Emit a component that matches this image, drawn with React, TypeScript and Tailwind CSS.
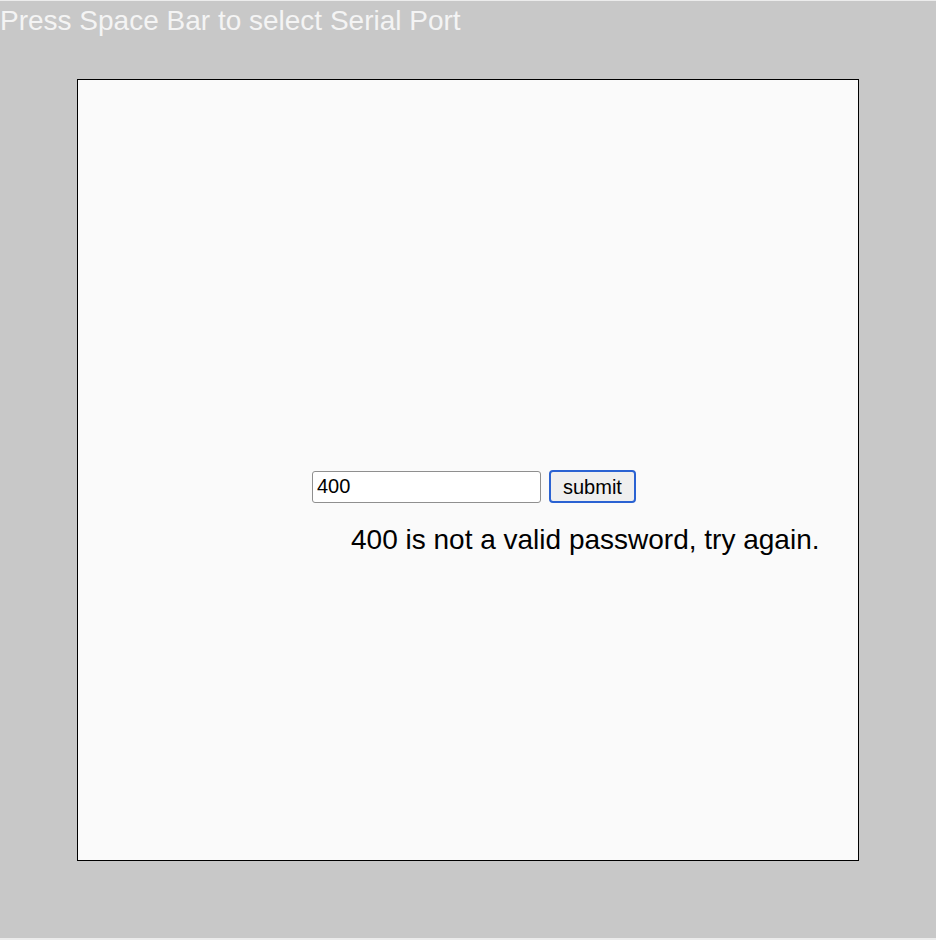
export default function App() {
  return (
    <div className="w-[936px] h-[940px] bg-[#ececec] pt-px font-['Liberation_Sans',Arial,sans-serif]">
      <div className="h-[937px] bg-[#c8c8c8]">
        <div className="h-[40px] text-[28px] leading-[40px] text-[#f4f4f4]">
          Press Space Bar to select Serial Port
        </div>
        <div className="ml-[77px] mt-[38px] w-[782px] h-[782px] border border-black bg-[#fafafa]">
          <div className="pt-[390px] pl-[234px] flex flex-col">
            <div className="flex items-center gap-2">
              <input
                defaultValue="400"
                className="w-[229px] h-[32px] border border-[#8f8f8f] rounded-[3px] bg-white px-[4px] text-[20px] text-black outline-none"
              />
              <button className="h-[33px] px-[12px] border-2 border-[#2a62d2] rounded-[4px] bg-[#efefef] text-[20px] text-black">
                submit
              </button>
            </div>
            <div className="ml-[39px] mt-[16px] text-[28px] text-black">
              400 is not a valid password, try again.
            </div>
          </div>
        </div>
      </div>
    </div>
  );
}
